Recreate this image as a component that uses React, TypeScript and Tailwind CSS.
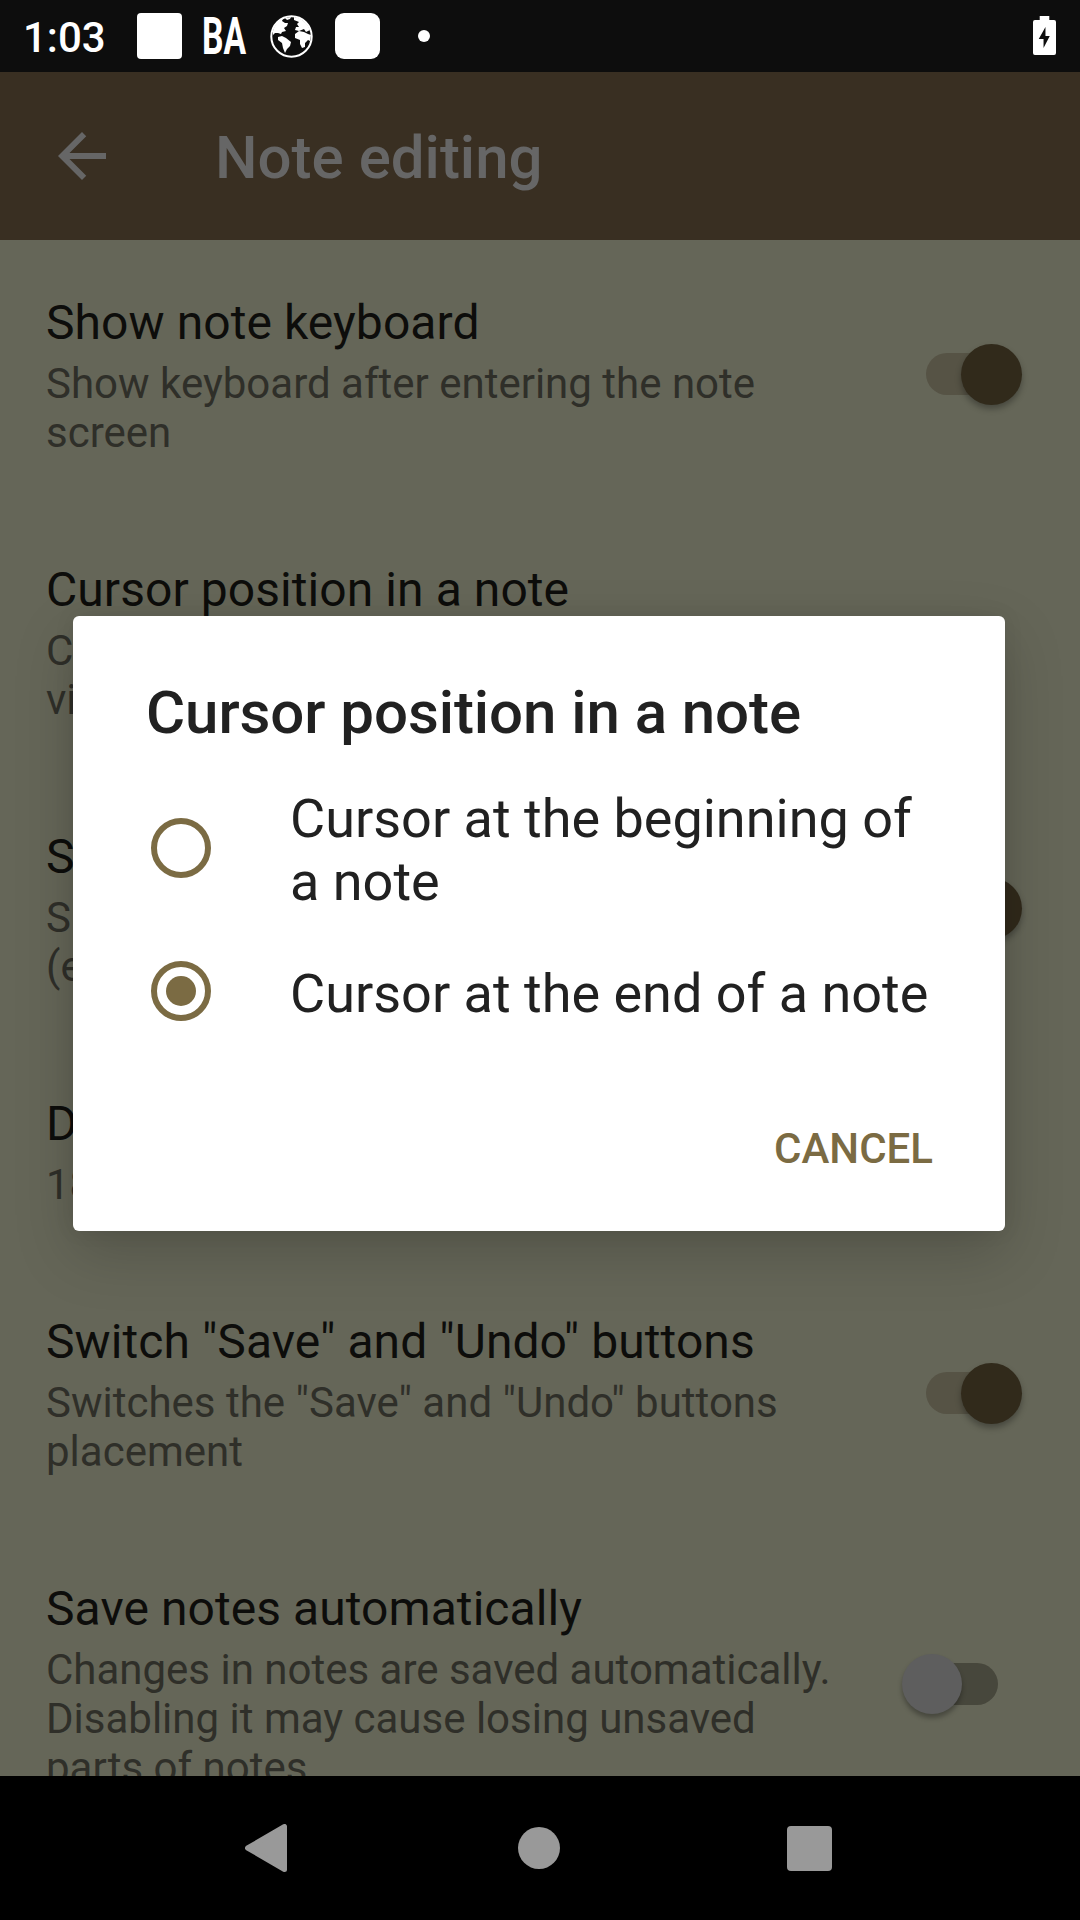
import React from "react";

function Switch({ on }: { on: boolean }) {
  return (
    <div className="relative h-[60px] w-[96px]">
      <div
        className={
          on
            ? "absolute left-0 top-[9px] h-[42px] w-[90px] rounded-full bg-[#565345]"
            : "absolute left-[6px] top-[9px] h-[42px] w-[90px] rounded-full bg-[#47473c]"
        }
      />
      <div
        className={
          on
            ? "absolute left-[35px] top-0 size-[61px] rounded-full bg-[#312a1b] shadow-[0_4px_6px_rgba(0,0,0,0.3)]"
            : "absolute left-0 top-0 size-[60px] rounded-full bg-[#5e5e5e] shadow-[0_4px_5px_rgba(0,0,0,0.3)]"
        }
      />
    </div>
  );
}

type Pref = { title: string; summary: string[]; on?: boolean };

const prefs: Pref[] = [
  { title: "Show note keyboard", summary: ["Show keyboard after entering the note", "screen"], on: true },
  { title: "Cursor position in a note", summary: ["Cursor position after entering the note", "view"] },
  { title: "Show note buttons", summary: ["Show buttons under the note text", "(edit mode)"], on: true },
  { title: "Default font size", summary: ["18"] },
  { title: 'Switch "Save" and "Undo" buttons', summary: ['Switches the "Save" and "Undo" buttons', "placement"], on: true },
  {
    title: "Save notes automatically",
    summary: ["Changes in notes are saved automatically.", "Disabling it may cause losing unsaved", "parts of notes"],
    on: false,
  },
];

function Row({ title, summary, on }: Pref) {
  return (
    <div className="flex shrink-0 items-center justify-between pl-[46px]">
      <div className="pb-[50px] pt-[55px]">
        <div className="whitespace-nowrap text-[48px] leading-[56px] tracking-[0.07px] text-[#0d0d0b]">{title}</div>
        <div className="pt-[8px] text-[42px] leading-[49px] text-[#2f2f29]">
          {summary.map((s) => (
            <div key={s} className="whitespace-nowrap">{s}</div>
          ))}
        </div>
      </div>
      {on !== undefined && (
        <div className={on ? "mr-[58px]" : "mr-[82px] pb-[1px]"}>
          <Switch on={on} />
        </div>
      )}
    </div>
  );
}

function Radio({ checked }: { checked: boolean }) {
  return (
    <div className="mb-[5px] flex size-[60px] shrink-0 items-center justify-center rounded-full border-[6px] border-[#7b6b43]">
      {checked && <div className="size-[30px] rounded-full bg-[#7b6b43]" />}
    </div>
  );
}

export default function App() {
  return (
    <div className="relative flex h-[1920px] w-[1080px] flex-col overflow-hidden bg-[#656658] font-[Roboto,sans-serif]">
      <header className="flex h-[72px] shrink-0 items-center bg-[#0d0d0d] text-white">
        <span className="ml-[23px] w-[114px] pt-[3px] text-[42px] font-medium leading-[49px]">1:03</span>
        <span className="h-[46px] w-[45px] rounded-[4px] bg-white" />
        <span className="ml-[20px] block w-[46px]">
          <span className="block w-[70px] origin-left scale-x-[0.66] pt-[1px] text-[51px] font-bold leading-[60px]">BA</span>
        </span>
        <svg className="ml-[22px]" width="43" height="43" viewBox="0 0 43 43">
          <circle cx="21.5" cy="21.5" r="20.2" fill="none" stroke="white" strokeWidth="2" />
          <path
            fill="white"
            d="M3 16C4 11 8 6 13 3.5L12 6L15 8L18 8L17 11L14 13L16 16L12 17L11 19L8 18L5 18L3 20Z
              M15 3L21 2L20 4L17 5ZM8 22L12 21L16 23L21 27L20 31L17 34L15 38L13 33L12 28L8 25Z
              M24 2C32 3 38 9 40 15L36 17L34 14L29 16L25 15L26 12L29 12L27 9L29 7L24 5Z
              M25 19L29 16L34 17L38 19L41 20L40 26L38 25L35 28L35 32L32 33L30 29L30 25L25 23Z"
          />
        </svg>
        <span className="ml-[22px] h-[46px] w-[45px] rounded-[9px] bg-white" />
        <span className="ml-[38px] size-[12px] rounded-full bg-white" />
        <svg className="ml-auto mr-[24px] -mt-[1px]" width="23" height="39" viewBox="0 0 24 39" preserveAspectRatio="none">
          <path fill="white" d="M7 0H17V4H22Q24 4 24 6V37Q24 39 22 39H2Q0 39 0 37V6Q0 4 2 4H7Z" />
          <path fill="#0d0d0d" d="M13 11V20H17.5L11 32V23H6Z" />
        </svg>
      </header>

      <div className="flex h-[168px] shrink-0 items-center bg-[#392f22] text-[#666]">
        <svg className="ml-[58px]" width="48" height="48" viewBox="0 0 16 16">
          <path fill="currentColor" d="M16 7H3.83l5.59-5.59L8 0 0 8l8 8 1.41-1.41L3.83 9H16z" />
        </svg>
        <h1 className="ml-[109px] pt-1 text-[60px] font-medium leading-[70px]">Note editing</h1>
      </div>

      <main className="flex min-h-0 flex-1 flex-col overflow-hidden">
        {prefs.map((p) => (
          <Row key={p.title} {...p} />
        ))}
      </main>

      <nav className="flex h-[144px] shrink-0 items-center bg-black">
        <svg className="ml-[245px]" width="42" height="48" viewBox="0 0 42 48">
          <path d="M39.5 2.5V45.5L2.5 24Z" fill="#999" stroke="#999" strokeWidth="5" strokeLinejoin="round" />
        </svg>
        <span className="ml-[231px] size-[42px] rounded-full bg-[#999]" />
        <span className="ml-[227px] size-[45px] rounded-[4px] bg-[#999]" />
      </nav>

      <div
        role="dialog"
        className="absolute left-[73px] top-[616px] flex h-[615px] w-[932px] flex-col rounded-[6px] bg-white pl-[73px] text-[#212121] shadow-[0_22px_60px_rgba(0,0,0,0.18),0_0_20px_rgba(0,0,0,0.08)]"
      >
        <h2 className="pt-[62px] text-[60px] font-medium leading-[70px] tracking-[-0.07px]">Cursor position in a note</h2>
        <div className="mt-[39px] flex items-center gap-[79px] pl-[5px] text-[54px] leading-[63px]">
          <Radio checked={false} />
          <div className="whitespace-nowrap">
            Cursor at the beginning of
            <br />a note
          </div>
        </div>
        <div className="mt-[48px] flex items-center gap-[79px] pl-[5px] text-[54px] leading-[63px]">
          <Radio checked />
          <div className="whitespace-nowrap">Cursor at the end of a note</div>
        </div>
        <button className="mr-[72px] mt-[98px] self-end text-[42px] font-medium leading-[49px] text-[#7b6b43]">CANCEL</button>
      </div>
    </div>
  );
}
